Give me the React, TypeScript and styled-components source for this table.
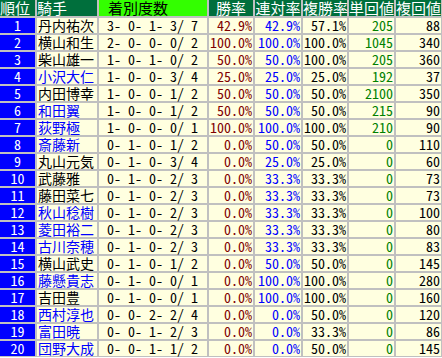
import styled, { createGlobalStyle } from "styled-components";

const GlobalStyle = createGlobalStyle`
body {
  margin:0;
  background:#ffffff;
}
`

type Row = [string, boolean, string, string, string, string, string, string]

// 騎手, 青字, 着別度数, 勝率, 連対率, 複勝率, 単回値, 複回値
const rows: Row[] = [
  ["丹内祐次", false, "3- 0- 1- 3/ 7", "42.9%", "42.9%", "57.1%", "205", "88"],
  ["横山和生", false, "2- 0- 0- 0/ 2", "100.0%", "100.0%", "100.0%", "1045", "340"],
  ["柴山雄一", false, "1- 0- 1- 0/ 2", "50.0%", "50.0%", "100.0%", "205", "360"],
  ["小沢大仁", true, "1- 0- 0- 3/ 4", "25.0%", "25.0%", "25.0%", "192", "37"],
  ["内田博幸", false, "1- 0- 0- 1/ 2", "50.0%", "50.0%", "50.0%", "2100", "350"],
  ["和田翼", true, "1- 0- 0- 1/ 2", "50.0%", "50.0%", "50.0%", "215", "90"],
  ["荻野極", true, "1- 0- 0- 0/ 1", "100.0%", "100.0%", "100.0%", "210", "90"],
  ["斎藤新", true, "0- 1- 0- 1/ 2", "0.0%", "50.0%", "50.0%", "0", "110"],
  ["丸山元気", false, "0- 1- 0- 3/ 4", "0.0%", "25.0%", "25.0%", "0", "60"],
  ["武藤雅", false, "0- 1- 0- 2/ 3", "0.0%", "33.3%", "33.3%", "0", "73"],
  ["藤田菜七", false, "0- 1- 0- 2/ 3", "0.0%", "33.3%", "33.3%", "0", "73"],
  ["秋山稔樹", true, "0- 1- 0- 2/ 3", "0.0%", "33.3%", "33.3%", "0", "100"],
  ["菱田裕二", true, "0- 1- 0- 2/ 3", "0.0%", "33.3%", "33.3%", "0", "80"],
  ["古川奈穂", true, "0- 1- 0- 2/ 3", "0.0%", "33.3%", "33.3%", "0", "83"],
  ["横山武史", false, "0- 1- 0- 1/ 2", "0.0%", "50.0%", "50.0%", "0", "145"],
  ["藤懸貴志", true, "0- 1- 0- 0/ 1", "0.0%", "100.0%", "100.0%", "0", "280"],
  ["吉田豊", false, "0- 1- 0- 0/ 1", "0.0%", "100.0%", "100.0%", "0", "160"],
  ["西村淳也", true, "0- 0- 2- 2/ 4", "0.0%", "0.0%", "50.0%", "0", "120"],
  ["富田暁", true, "0- 0- 1- 2/ 3", "0.0%", "0.0%", "33.3%", "0", "86"],
  ["団野大成", true, "0- 0- 1- 1/ 2", "0.0%", "0.0%", "50.0%", "0", "145"],
]

export default function App() {
  return (
    <>
      <GlobalStyle />
      <Table>
        <HeadCell $align="left">順位</HeadCell>
        <HeadCell $align="left">騎手</HeadCell>
        <RecordHead>着別度数</RecordHead>
        <HeadCell>勝率</HeadCell>
        <HeadCell>連対率</HeadCell>
        <HeadCell>複勝率</HeadCell>
        <HeadCell>単回値</HeadCell>
        <HeadCell>複回値</HeadCell>
        {rows.map((r, i) => (
          <Line key={i}>
            <RankCell>{i + 1}</RankCell>
            <NameCell $blue={r[1]}>{r[0]}</NameCell>
            <RecordCell>{r[2]}</RecordCell>
            <NumCell $color="#800000">{r[3]}</NumCell>
            <NumCell $color="#0000ff">{r[4]}</NumCell>
            <NumCell>{r[5]}</NumCell>
            <NumCell $color="#008000">{r[6]}</NumCell>
            <NumCell>{r[7]}</NumCell>
          </Line>
        ))}
      </Table>
    </>
  )
}

const Table = styled.div`
display:grid;
grid-template-columns:35px 60px 108px 44px 46px 44px 45px 45px;
grid-template-rows:16px;
grid-auto-rows:15px;
gap:2px;
width:441px;
padding:0 1px 1px 0;
background:#c0c0c0;
font-family:"Noto Sans Mono CJK JP", "Noto Sans CJK JP", "DejaVu Sans Mono", monospace;
font-size:14px;
line-height:15px;
`

const Line = styled.div`
display:contents;
`

const HeadCell = styled.div<{ $align?: string }>`
background:#006f3c;
color:#ffffff;
font-size:15px;
line-height:16px;
text-align:${p => p.$align || "center"};
white-space:nowrap;
`

const RecordHead = styled(HeadCell)`
background:#33ff00;
color:#000000;
text-align:left;
padding-left:9px;
`

const RankCell = styled.div`
background:#0000ff;
color:#ffffff;
text-align:center;
`

const BodyCell = styled.div`
background:#ffffe0;
white-space:nowrap;
`

const NameCell = styled(BodyCell)<{ $blue?: boolean }>`
color:${p => (p.$blue ? "#0000ff" : "#000000")};
padding-left:1px;
`

const RecordCell = styled(BodyCell)`
color:#000000;
padding-left:8px;
white-space:pre;
`

const NumCell = styled(BodyCell)<{ $color?: string }>`
color:${p => p.$color || "#000000"};
text-align:right;
padding-right:1px;
`
